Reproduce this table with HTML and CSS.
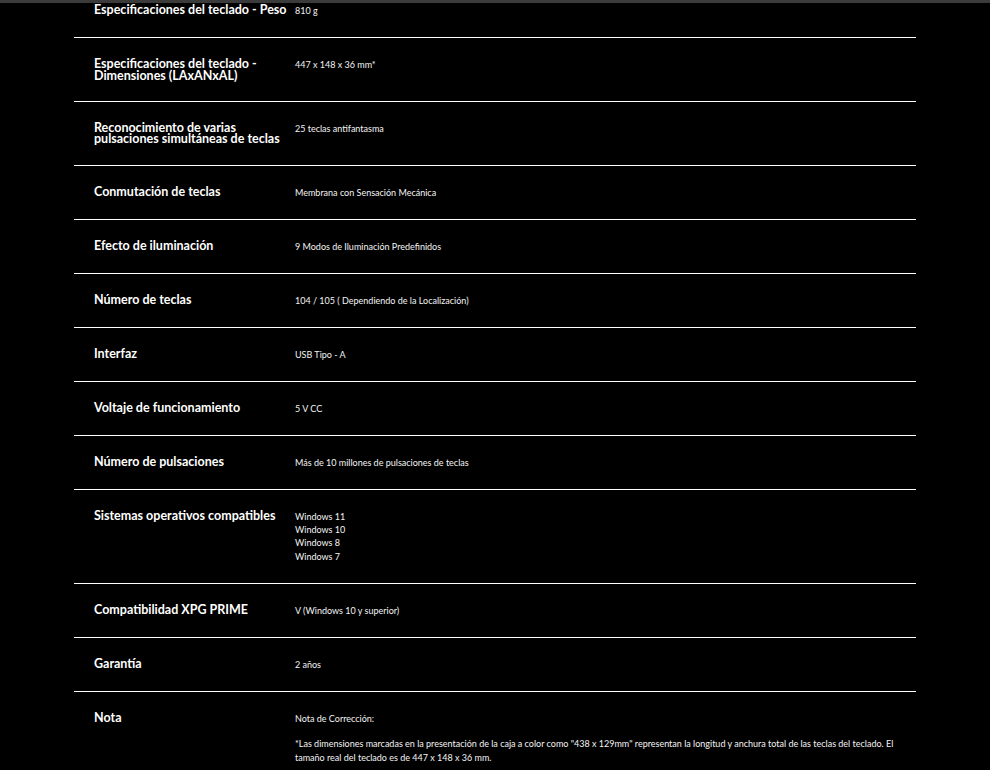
FILE: index.html
```html
<!DOCTYPE html>
<html lang="es">
<head>
<meta charset="utf-8">
<title>Especificaciones</title>
<link rel="stylesheet" href="styles.css">
</head>
<body>
<div class="topbar"></div>
<main class="specs">
  <div class="row"><div class="label">Especificaciones del teclado - Peso</div><div class="value">810 g</div></div>
  <div class="row"><div class="label">Especificaciones del teclado - Dimensiones (LAxANxAL)</div><div class="value">447 x 148 x 36 mm*</div></div>
  <div class="row"><div class="label">Reconocimiento de varias pulsaciones simultáneas de teclas</div><div class="value">25 teclas antifantasma</div></div>
  <div class="row"><div class="label">Conmutación de teclas</div><div class="value">Membrana con Sensación Mecánica</div></div>
  <div class="row"><div class="label">Efecto de iluminación</div><div class="value">9 Modos de Iluminación Predefinidos</div></div>
  <div class="row"><div class="label">Número de teclas</div><div class="value">104 / 105 ( Dependiendo de la Localización)</div></div>
  <div class="row"><div class="label">Interfaz</div><div class="value">USB Tipo - A</div></div>
  <div class="row"><div class="label">Voltaje de funcionamiento</div><div class="value">5 V CC</div></div>
  <div class="row"><div class="label">Número de pulsaciones</div><div class="value">Más de 10 millones de pulsaciones de teclas</div></div>
  <div class="row"><div class="label">Sistemas operativos compatibles</div><div class="value">Windows 11<br>Windows 10<br>Windows 8<br>Windows 7</div></div>
  <div class="row"><div class="label">Compatibilidad XPG PRIME</div><div class="value">V (Windows 10 y superior)</div></div>
  <div class="row"><div class="label">Garantía</div><div class="value">2 años</div></div>
  <div class="row"><div class="label">Nota</div><div class="value"><p class="para">Nota de Corrección:</p><p class="para">*Las dimensiones marcadas en la presentación de la caja a color como "438 x 129mm" representan la longitud y anchura total de las teclas del teclado. El tamaño real del teclado es de 447 x 148 x 36 mm.</p></div></div>
</main>
</body>
</html>
```
FILE: styles.css
```css
html, body {
  margin: 0;
  padding: 0;
  background: #000;
  overflow: hidden;
}
body {
  font-family: "Lato", "Open Sans", sans-serif;
  color: #fff;
}
.topbar {
  position: fixed;
  top: 0;
  left: 0;
  right: 0;
  height: 3px;
  background: #3b3b3b;
  z-index: 2;
}
.specs {
  margin: -16px 0 0 74px;
  width: 842px;
}
.row {
  display: grid;
  grid-template-columns: 201px 1fr;
  padding: 20px 14px 19.6px 20px;
  border-bottom: 1px solid #fff;
}
.label {
  font-weight: 700;
  font-size: 12.5px;
  line-height: 11.6px;
  color: #fff;
  padding-right: 6px;
}
.value {
  font-size: 9px;
  line-height: 13.4px;
  color: #f4f4f4;
}
.para {
  margin: 0;
}
.para + .para {
  margin-top: 12px;
}
```
